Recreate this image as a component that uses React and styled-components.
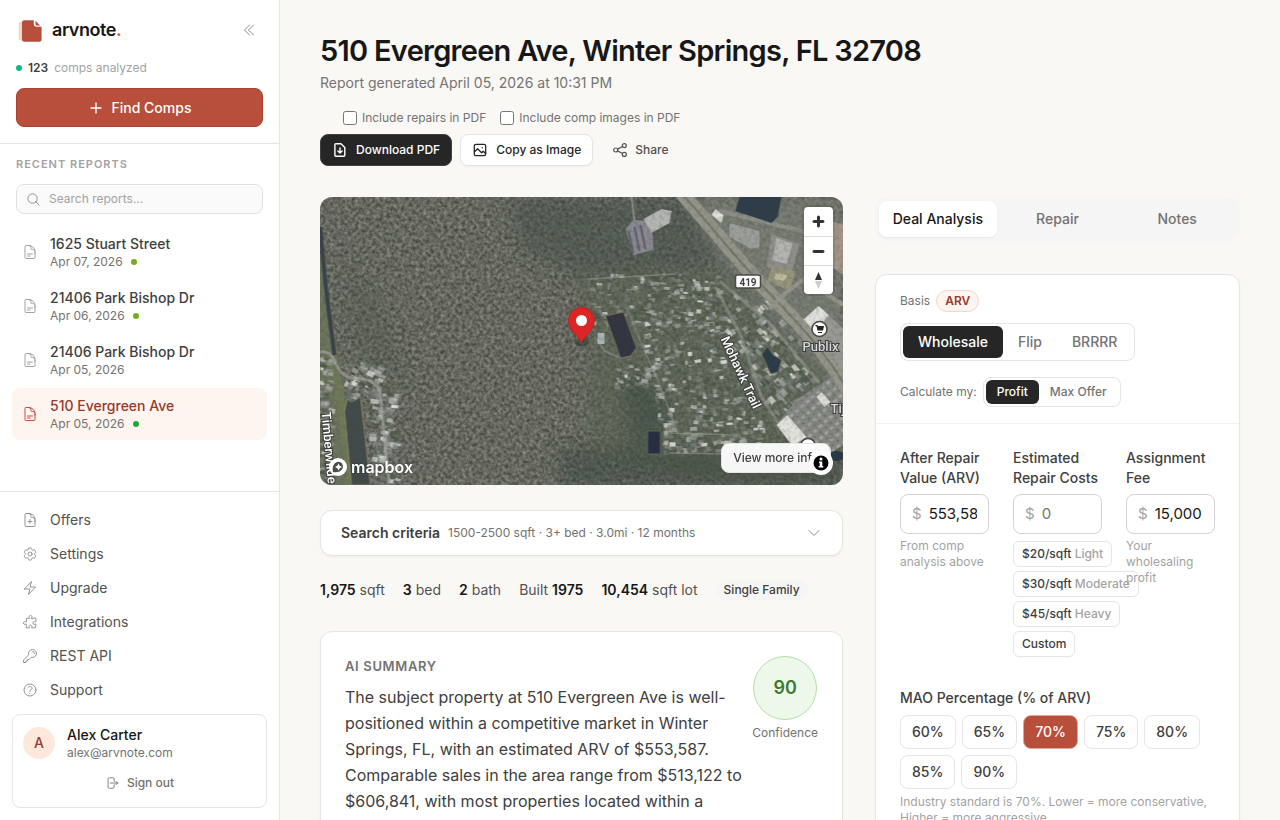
// -------------------------------------------------------------------------
// Libraries

import React from 'react';
import styled, { createGlobalStyle, css } from 'styled-components';

// -------------------------------------------------------------------------
// Icons

import {
  HiOutlineArrowRightOnRectangle,
  HiOutlineBolt,
  HiOutlineChevronDoubleLeft,
  HiOutlineChevronDown,
  HiOutlineCog6Tooth,
  HiOutlineDocumentPlus,
  HiOutlineDocumentText,
  HiOutlineKey,
  HiOutlineMagnifyingGlass,
  HiOutlinePlus,
  HiOutlinePuzzlePiece,
  HiOutlineQuestionMarkCircle,
} from 'react-icons/hi2';

// -------------------------------------------------------------------------
// Data

const reports = [
  { id: 1, name: '1625 Stuart Street', date: 'Apr 07, 2026', dot: '#74ad1c' },
  { id: 2, name: '21406 Park Bishop Dr', date: 'Apr 06, 2026', dot: '#74ad1c' },
  { id: 3, name: '21406 Park Bishop Dr', date: 'Apr 05, 2026' },
  { id: 4, name: '510 Evergreen Ave', date: 'Apr 05, 2026', dot: '#1eaa32', active: true },
];

const links = [
  { label: 'Offers', icon: HiOutlineDocumentPlus },
  { label: 'Settings', icon: HiOutlineCog6Tooth },
  { label: 'Upgrade', icon: HiOutlineBolt },
  { label: 'Integrations', icon: HiOutlinePuzzlePiece },
  { label: 'REST API', icon: HiOutlineKey },
  { label: 'Support', icon: HiOutlineQuestionMarkCircle },
];

const repairPresets = [
  { rate: '$20/sqft', level: 'Light' },
  { rate: '$30/sqft', level: 'Moderate' },
  { rate: '$45/sqft', level: 'Heavy' },
  { rate: 'Custom' },
];

const percentages = [60, 65, 70, 75, 80, 85, 90];

// -------------------------------------------------------------------------
// Styles

const GlobalStyle = createGlobalStyle`
  *, *::before, *::after {
    box-sizing: border-box;
  }
  body {
    margin: 0;
    background: #faf8f5;
    color: #171717;
    font-family: Inter, "Liberation Sans", sans-serif;
    font-size: 14px;
    line-height: 20px;
  }
  h1, h2, p, ul {
    margin: 0;
    padding: 0;
  }
  button, input {
    font: inherit;
    color: inherit;
  }
  button {
    cursor: pointer;
  }
`;

const Shell = styled.div`
  display: flex;
  height: 100vh;
  overflow: hidden;
`;

const Sidebar = styled.aside`
  display: flex;
  flex-direction: column;
  flex: 0 0 280px;
  background: #fff;
  border-right: 1px solid #e5e5e5;
`;

const SidebarTop = styled.div`
  padding: 14px 16px 16px;
  border-bottom: 1px solid #e5e5e5;
`;

const BrandRow = styled.div`
  display: flex;
  align-items: center;
  justify-content: space-between;
  height: 32px;
`;

const Brand = styled.a`
  display: flex;
  align-items: center;
  gap: 8px;
  color: #171717;
  font-family: Inter, sans-serif;
  font-size: 18px;
  font-weight: 600;
  letter-spacing: -0.025em;
  text-decoration: none;

  span span {
    color: #d9573d;
  }
`;

const IconButton = styled.button`
  display: flex;
  padding: 6px;
  border: 0;
  background: none;
  color: #8c8c8c;
  font-size: 16px;
`;

const CompCount = styled.p`
  display: flex;
  align-items: center;
  gap: 6px;
  margin: 14px 0 12px;
  color: #a3a3a3;
  font-size: 12px;
  line-height: 16px;

  strong {
    color: #404040;
    font-weight: 600;
  }
`;

const Dot = styled.span`
  flex: none;
  width: 6px;
  height: 6px;
  border-radius: 50%;
  background: ${props => props.$color};
`;

const FindButton = styled.button`
  display: flex;
  align-items: center;
  justify-content: center;
  gap: 8px;
  width: 100%;
  height: 39px;
  border: 1px solid #a84331;
  border-radius: 8px;
  background: #b84f3b;
  color: #fff;
  font-weight: 500;

  svg {
    font-size: 16px;
    stroke-width: 2;
  }
`;

const Recent = styled.section`
  flex: 1;
  min-height: 0;
  padding: 10px 12px;
`;

const RecentTitle = styled.h2`
  margin: 0 4px 10px;
  color: #a3a3a3;
  font-size: 11px;
  font-weight: 600;
  letter-spacing: 1px;
  text-transform: uppercase;
`;

const SearchBox = styled.label`
  display: flex;
  align-items: center;
  gap: 8px;
  height: 30px;
  margin: 0 4px 12px;
  padding: 0 9px;
  border: 1px solid #e0e0e0;
  border-radius: 8px;
  background: #fafafa;
  color: #8c8c8c;

  svg {
    flex: none;
    font-size: 15px;
  }
  input {
    width: 100%;
    padding: 0;
    border: 0;
    outline: 0;
    background: none;
    font-size: 12px;
  }
  input::placeholder {
    color: #a3a3a3;
  }
`;

const List = styled.ul`
  display: flex;
  flex-direction: column;
  gap: ${props => props.$gap}px;
  list-style: none;
`;

const ReportLink = styled.a`
  display: flex;
  align-items: center;
  gap: 12px;
  height: 52px;
  padding: 0 10px;
  border-radius: 8px;
  color: #404040;
  font-weight: 500;
  line-height: 20px;
  text-decoration: none;

  > svg {
    flex: none;
    color: #a3a3a3;
    font-size: 16px;
  }
  ${props => props.$active && css`
    background: #fef5f0;
    color: #97392b;

    > svg {
      color: #c2513c;
    }
  `}
`;

const ReportDate = styled.span`
  display: flex;
  align-items: center;
  gap: 8px;
  color: #737373;
  font-size: 12px;
  font-weight: 400;
  line-height: 16px;
`;

const SidebarBottom = styled.nav`
  padding: 11px 12px 12px;
  border-top: 1px solid #e5e5e5;
`;

const NavLink = styled.a`
  display: flex;
  align-items: center;
  gap: 12px;
  height: 34px;
  padding: 0 10px;
  color: #525252;
  text-decoration: none;

  svg {
    color: #949494;
    font-size: 16px;
  }
`;

const Account = styled.div`
  display: flex;
  flex-direction: column;
  gap: 7px;
  margin-top: 7px;
  padding: 10px 10px 9px;
  border: 1px solid #e5e5e5;
  border-radius: 8px;
`;

const AccountUser = styled.div`
  display: flex;
  align-items: center;
  gap: 12px;
  font-weight: 500;

  small {
    display: block;
    color: #737373;
    font-size: 12px;
    font-weight: 400;
    line-height: 16px;
  }
`;

const Avatar = styled.span`
  display: grid;
  place-items: center;
  width: 32px;
  height: 32px;
  border-radius: 50%;
  background: #fee8dc;
  color: #97392b;
  font-weight: 500;
`;

const SignOut = styled.button`
  display: flex;
  align-items: center;
  justify-content: center;
  gap: 8px;
  height: 30px;
  padding: 0;
  border: 0;
  background: none;
  color: #737373;
  font-size: 12px;
  font-weight: 500;

  svg {
    font-size: 14px;
  }
`;

const Main = styled.main`
  flex: 1;
  min-width: 0;
  overflow-y: auto;
  padding: 32px 40px;
  scrollbar-width: none;
`;

const Title = styled.h1`
  font-size: 29px;
  font-weight: 600;
  letter-spacing: -0.025em;
  line-height: 38px;
`;

const Subtitle = styled.p`
  margin-top: 3px;
  color: #737373;
`;

const Actions = styled.div`
  display: flex;
  flex-direction: column;
  align-items: flex-end;
  gap: 8px;
  width: fit-content;
  margin: 17px 0 31px;
`;

const ActionRow = styled.div`
  display: flex;
  gap: ${props => props.$gap}px;
`;

const Check = styled.label`
  display: flex;
  align-items: center;
  gap: 5px;
  color: #737373;
  font-size: 12px;
  line-height: 16px;

  input {
    width: 14px;
    height: 14px;
    margin: 0;
  }
`;

const ActionButton = styled.button`
  display: flex;
  align-items: center;
  gap: 8px;
  height: 32px;
  padding: 0 11px;
  border: 1px solid transparent;
  border-radius: 8px;
  background: none;
  color: #525252;
  font-size: 12px;
  font-weight: 500;

  ${props => props.$look === 'dark' && css`
    border-color: #404040;
    background: #262626;
    color: #fff;
  `}
  ${props => props.$look === 'light' && css`
    border-color: #e5e5e5;
    background: #fff;
    color: #262626;
    box-shadow: 0 1px 2px rgba(0, 0, 0, 0.04);
  `}
`;

const Columns = styled.div`
  display: grid;
  grid-template-columns: minmax(0, 1fr) 365px;
  gap: 32px;
`;

const Column = styled.div`
  display: flex;
  flex-direction: column;
  min-width: 0;
`;

const MapFrame = styled.div`
  position: relative;
  height: 288px;
  overflow: hidden;
  border-radius: 12px;

  > svg {
    display: block;
    width: 100%;
    height: 100%;
  }
`;

const MapControls = styled.div`
  position: absolute;
  top: 10px;
  right: 10px;
  width: 29px;
  border-radius: 4px;
  background: #fff;
  box-shadow: 0 0 0 2px rgba(0, 0, 0, 0.1);
`;

const MapControl = styled.button`
  display: block;
  width: 29px;
  height: 29px;
  padding: 0;
  border: 0;
  background: none;

  & + & {
    border-top: 1px solid #ddd;
  }
  svg {
    display: block;
  }
`;

const MapBrand = styled.a`
  position: absolute;
  left: 8px;
  bottom: 8px;
  display: flex;
  align-items: center;
  gap: 3px;
  color: #fff;
  font-size: 16px;
  font-weight: 600;
  text-decoration: none;
  text-shadow: 0 0 2px rgba(0, 0, 0, 0.6);
`;

const MoreInfo = styled.button`
  position: absolute;
  right: 12px;
  bottom: 12px;
  height: 30px;
  padding: 0 11px;
  border: 1px solid #e5e5e5;
  border-radius: 8px;
  background: rgba(255, 255, 255, 0.95);
  color: #404040;
  font-size: 12px;
  font-weight: 500;
`;

const Attribution = styled.button`
  position: absolute;
  right: 10px;
  bottom: 10px;
  width: 24px;
  height: 24px;
  padding: 0;
  border: 0;
  border-radius: 50%;
  background: #fff;

  svg {
    display: block;
  }
`;

const Card = styled.section`
  border: 1px solid #e5e5e5;
  border-radius: 12px;
  background: #fff;
  box-shadow: 0 1px 2px rgba(0, 0, 0, 0.05);
`;

const Criteria = styled.button`
  display: flex;
  align-items: center;
  gap: 8px;
  height: 46px;
  margin: 25px 0 24px;
  padding: 0 20px;
  border: 1px solid #e5e5e5;
  border-radius: 12px;
  background: #fff;
  box-shadow: 0 1px 2px rgba(0, 0, 0, 0.05);
  color: #737373;
  font-size: 12px;

  strong {
    color: #404040;
    font-size: 14px;
    font-weight: 600;
  }
  svg {
    margin-left: auto;
    color: #8c8c8c;
    font-size: 16px;
  }
`;

const Facts = styled.div`
  display: flex;
  flex-wrap: wrap;
  align-items: center;
  gap: 18px;
  margin-bottom: 31px;
  color: #525252;

  strong {
    color: #171717;
    font-weight: 600;
  }
`;

const Tag = styled.span`
  padding: 0 8px;
  border-radius: 10px;
  background: #f5f5f5;
  color: #404040;
  font-size: 12px;
  font-weight: 500;
`;

const SummaryCard = styled(Card)`
  display: flex;
  align-items: flex-start;
  flex: 1;
  gap: 8px;
  padding: 24px;

  h2 {
    margin-bottom: 8px;
    color: #737373;
    font-size: 13px;
    font-weight: 600;
    letter-spacing: 0.05em;
  }
  p {
    color: #404040;
    font-size: 16px;
    line-height: 26px;
  }
`;

const SummaryText = styled.div`
  flex: 1;
`;

const Confidence = styled.div`
  display: flex;
  flex-direction: column;
  align-items: center;
  gap: 3px;
  color: #737373;
  font-size: 12px;
`;

const Score = styled.span`
  display: grid;
  place-items: center;
  width: 64px;
  height: 64px;
  border: 1px solid #b5e0a8;
  border-radius: 50%;
  background: #eef8ea;
  color: #3d7a30;
  font-size: 18px;
  font-weight: 600;
`;

const Tabs = styled.div`
  display: flex;
  gap: 2px;
  padding: 4px;
  border-radius: 12px;
  background: #f5f5f5;
`;

const Tab = styled.button`
  flex: 1;
  height: 36px;
  padding: 0;
  border: 0;
  border-radius: 8px;
  background: ${props => (props.$active ? '#fff' : 'none')};
  box-shadow: ${props => (props.$active ? '0 1px 2px rgba(0, 0, 0, 0.06)' : 'none')};
  color: ${props => (props.$active ? '#171717' : '#737373')};
  font-weight: 500;
`;

const DealCard = styled(Card)`
  flex: 1;
  margin-top: 33px;
`;

const DealHead = styled.div`
  display: flex;
  flex-direction: column;
  align-items: flex-start;
  padding: 15px 24px 16px;
  border-bottom: 1px solid #f0f0f0;
`;

const Line = styled.div`
  display: flex;
  align-items: center;
  gap: 6px;
  color: #737373;
  font-size: 12px;
`;

const Basis = styled.span`
  padding: 0 8px;
  border: 1px solid #f6d5ca;
  border-radius: 11px;
  background: #fef5f0;
  color: #97392b;
  font-weight: 600;
`;

const Segments = styled.div`
  display: flex;
  margin: ${props => (props.$small ? '0' : '11px 0 16px')};
  padding: 2px;
  border: 1px solid #e5e5e5;
  border-radius: 8px;
`;

const Segment = styled.button`
  height: ${props => (props.$small ? 24 : 32)}px;
  padding: 0 ${props => (props.$small ? 11 : 15)}px;
  border: 0;
  border-radius: 6px;
  background: ${props => (props.$active ? '#262626' : 'none')};
  color: ${props => (props.$active ? '#fff' : '#737373')};
  font-size: ${props => (props.$small ? 12 : 14)}px;
  font-weight: 500;
`;

const DealBody = styled.div`
  padding: 24px;
`;

const Fields = styled.div`
  display: grid;
  grid-template-columns: repeat(3, minmax(0, 1fr));
  gap: 24px;
  margin-bottom: 31px;
`;

const Label = styled.label`
  display: block;
  color: #404040;
  font-weight: 500;
`;

const Money = styled.div`
  display: flex;
  align-items: center;
  gap: 7px;
  height: 40px;
  margin: 6px 0 4px;
  padding: 0 11px;
  border: 1px solid #d4d4d4;
  border-radius: 8px;
  color: #a3a3a3;
  font-size: 15px;

  input {
    width: 100%;
    min-width: 0;
    padding: 0;
    border: 0;
    outline: 0;
    background: none;
    color: #171717;
  }
  input::placeholder {
    color: #737373;
  }
`;

const Help = styled.p`
  color: #a3a3a3;
  font-size: 12px;
  line-height: 16px;
`;

const Presets = styled.div`
  display: flex;
  flex-direction: column;
  align-items: flex-start;
  gap: 4px;
  padding-top: 3px;
`;

const Preset = styled.button`
  height: 26px;
  padding: 0 8px;
  border: 1px solid #e5e5e5;
  border-radius: 6px;
  background: none;
  color: #404040;
  font-size: 12px;
  font-weight: 500;
  white-space: nowrap;

  span {
    color: #a3a3a3;
  }
`;

const Percentages = styled.div`
  display: flex;
  flex-wrap: wrap;
  gap: 6px;
  margin: 7px 0 5px;
`;

const Percentage = styled.button`
  height: 34px;
  padding: 0 11px;
  border: 1px solid ${props => (props.$active ? '#e0a598' : '#e5e5e5')};
  border-radius: 8px;
  background: ${props => (props.$active ? '#b84f3b' : 'none')};
  color: ${props => (props.$active ? '#fff' : '#404040')};
  font-weight: 500;
`;

const StreetName = styled.text`
  fill: ${props => (props.$muted ? '#d9d9d9' : '#fff')};
  stroke: #3a3d3c;
  stroke-width: 2px;
  paint-order: stroke;
  font-family: Roboto, sans-serif;
  font-size: 13px;
  font-weight: 500;
`;

// -------------------------------------------------------------------------
// Drawings

function Logo() {
  return (
    <svg width="28" height="28" viewBox="0 0 28 28" aria-hidden="true">
      <rect x="2.700" y="5.500" width="12" height="19" rx="2.500" fill="#f3d5ce" />
      <path d="M8.500 4.300h9.300v3.200a3.200 3.200 0 0 0 3.200 3.200h4.600v12.500a2.500 2.500 0 0 1-2.500 2.500H8.500A2.500 2.500 0 0 1 6 23.200V6.800a2.500 2.500 0 0 1 2.500-2.500z" fill="#b84f3b" />
      <path d="M19.500 4.800l4.600 4.600H21a1.500 1.500 0 0 1-1.500-1.500z" fill="#b84f3b" />
    </svg>
  );
}

function DownloadIcon() {
  return (
    <svg width="16" height="16" viewBox="0 0 16 16" fill="none" stroke="currentColor" strokeWidth="1.4" strokeLinecap="round" strokeLinejoin="round">
      <path d="M3.800 1.800h5.200L12.800 5.600v7.700c0 .5-.4.900-.9.900H3.800c-.5 0-.9-.4-.9-.9V2.700c0-.5.4-.9.900-.9z" />
      <path d="M8 6v4.800M5.900 8.900 8 11l2.100-2.100" />
    </svg>
  );
}

function ImageIcon() {
  return (
    <svg width="16" height="16" viewBox="0 0 16 16" fill="none" stroke="currentColor" strokeWidth="1.3" strokeLinecap="round" strokeLinejoin="round">
      <rect x="2.300" y="2.300" width="11.400" height="11.400" rx="1.600" />
      <path d="M2.500 9.800 5.600 6.800l4 4 1.600-1.600 2.400 2.200" />
      <circle cx="10.200" cy="5.800" r=".7" fill="currentColor" stroke="none" />
    </svg>
  );
}

function ShareIcon() {
  return (
    <svg width="14" height="16" viewBox="1 0 14 16" fill="none" stroke="currentColor" strokeWidth="1.2">
      <circle cx="3.700" cy="8" r="2" />
      <circle cx="12.300" cy="3.600" r="2" />
      <circle cx="12.300" cy="12.400" r="2" />
      <path d="M5.500 7.100l5-2.600M5.500 8.900l5 2.600" />
    </svg>
  );
}

// Small repeatable generator, so that the roofs never move between renders
function roofs(seed, count, area, angle, size) {
  let value = seed * 7919;
  const next = () => {
    value = (value * 16807) % 2147483647;
    return value / 2147483647;
  };
  const shades = ['#b4b6b1', '#9a9d99', '#868984', '#dcdeda', '#6f7973', '#4b564a', '#545e4b'];
  return Array.from({ length: count }, (_, i) => {
    const x = area[0] + next() * area[2];
    const y = area[1] + next() * area[3];
    return (
      <rect
        key={`${seed}-${i}`}
        x={x}
        y={y}
        width={size * (0.4 + next() * 0.7)}
        height={size * (0.3 + next() * 0.4)}
        fill={shades[Math.floor(next() * shades.length)]}
        opacity={0.45 + next() * 0.5}
        transform={`rotate(${angle} ${x} ${y})`}
      />
    );
  });
}

function Satellite() {
  return (
    <svg viewBox="0 0 524 288" preserveAspectRatio="xMidYMid slice" role="img" aria-label="Satellite map">
      <defs>
        <filter id="forest" x="0" y="0" width="100%" height="100%" colorInterpolationFilters="sRGB">
          <feTurbulence type="fractalNoise" baseFrequency="0.28" numOctaves="3" seed="7" />
          <feColorMatrix values="0.420 0.060 0 0 0.170  0.420 0 0 0 0.205  0.400 0 0.040 0 0.165  0 0 0 0 1" />
        </filter>
        <filter id="grain" x="0" y="0" width="100%" height="100%" colorInterpolationFilters="sRGB">
          <feTurbulence type="fractalNoise" baseFrequency="0.25" numOctaves="3" seed="3" />
          <feColorMatrix values="0 0 0 0 0.250  0 0 0 0 0.290  0 0 0 0 0.250  2.400 0 0 0 -1" />
        </filter>
        <filter id="soft"><feGaussianBlur stdDeviation="9" /></filter>
        <filter id="photo"><feGaussianBlur stdDeviation="0.450" /></filter>
        <pattern id="parking" width="7" height="9" patternUnits="userSpaceOnUse" patternTransform="rotate(-42)">
          <rect width="7" height="9" fill="#868782" />
          <rect width="4" height="3" fill="#a3a4a1" />
          <rect x="4" y="5" width="2" height="2" fill="#6a6f6f" />
        </pattern>
      </defs>
      <rect width="524" height="288" filter="url(#forest)" />

      <g filter="url(#soft)">
        <path d="M190 0h180l40 70-150 10-60-30z" fill="#3f4d45" opacity=".5" />
        <path d="M262 75h150l112 120v93H400l-130-40z" fill="#556150" opacity=".5" />
        <path d="M300 170l50 30 0 40-40 10z" fill="#33443a" opacity=".4" />
        <path d="M240 250h150l134 10v30H240z" fill="#3a483e" opacity=".5" />
        <path d="M20 60l40 40 30 90-60-40z" fill="#4a5544" opacity=".3" />
        <path d="M370 0h154v200L400 60z" fill="#7e8179" opacity=".7" />
      </g>

      <g filter="url(#photo)">
        <path d="M0 60C12 105 16 150 22 180l14 108H0z" fill="#6d765a" opacity=".8" />
        <path d="M1 30c3 50 9 90 14 128" fill="none" stroke="#39434a" strokeWidth="4" />
        {roofs(11, 90, [-2, 155, 12, 130], 12, 7)}
        {roofs(23, 60, [26, 163, 36, 34], 25, 8)}
        {roofs(31, 110, [50, 188, 24, 98], 8, 8)}
        <path d="M0 155c14-2 14 10 20 18s14 9 22 9 12 3 18 10c2 12 4 50 10 94" fill="none" stroke="#a5a59c" strokeWidth="3" opacity=".7" />
        <path d="M12 165l16 123h14L22 185z" fill="#6f7a58" />
        <path d="M25 214l3-12 4 3 9-5 10 88H32z" fill="#434b4c" stroke="#8b8368" strokeWidth="1" />

        {roofs(41, 240, [268, 76, 135, 52], 4, 6)}
        {roofs(43, 170, [322, 120, 85, 65], -10, 6)}
        {roofs(44, 50, [295, 165, 40, 24], 8, 6)}
        {roofs(47, 120, [335, 185, 90, 40], 8, 6)}
        {roofs(53, 160, [342, 218, 100, 36], -2, 7)}
        {roofs(59, 90, [405, 95, 50, 60], 48, 7)}
        {roofs(61, 90, [428, 120, 60, 70], 48, 8)}
        {roofs(67, 50, [445, 170, 50, 50], 48, 8)}
        <g fill="none" stroke="#989992" strokeWidth="1.500" opacity=".6">
          <path d="M267 82l90-5M275 140l10 14 18 8M308 112l16 40 14 30 20 54M350 236l64 2M350 256l60 1" />
          <path d="M396 90l26 50 20 60 22 34M400 84l50 42 50 60" strokeWidth="3" />
        </g>

        <path d="M306 32l8-9 18 1 2 29-20 5z" fill="#8a8890" />
        <path d="M309 34l5 22M315 30l5 24M321 28l5 24" stroke="#605e69" strokeWidth="2" />
        <path d="M324 22l18-10 10 2-2 12-18 10z" fill="#b4b6b4" />
        <path d="M312 0l3 24" stroke="#8d908a" strokeWidth="2" />

        <path d="M410 26l30 8 0 16-8 2-22-12z" fill="#9c9e9a" />
        <path d="M396 12l8 6-2 8-10-8z" fill="#dfdfdb" />
        <path d="M400 14l124 30" stroke="#8d8e88" strokeWidth="4" />
        <path d="M420 0h42l-4 20-6 6-36-12z" fill="#2f3c48" />
        <path d="M452 37l28 10-9 32-24-9z" fill="#8f8f89" />
        <path d="M457 41l16 6-6 20-14-4z" fill="#b4b5b1" />
        <path d="M500 20l24 8v50l-28-18z" fill="#a39686" />
        <path d="M452 70l24 4-6 20-22-10z" fill="#97957b" />
        <path d="M456 76l12 2-3 6-10-2z" fill="#c0bba0" />
        <path d="M483 128l18-18 23 22v60l-22-28z" fill="#989993" />
        <path d="M478 128l21-19 10 9-14 18z" fill="#e0e0dc" />
        <path d="M458 226l20-24 46-30v76l-22 14-20-10z" fill="url(#parking)" />
        <path d="M457 228l11-10 19 22-14 9z" fill="#e2e2dc" />
        <path d="M497 200l5-5 9 10-6 5z" fill="#dcdcd6" />

        <path d="M362-4c30 34 46 54 70 81 30 34 68 66 96 116" fill="none" stroke="#96958c" strokeWidth="14" />
        <path d="M362-4c30 34 46 54 70 81 30 34 68 66 96 116" fill="none" stroke="#737868" strokeWidth="2" />
        <path d="M450 112l14-14 20-16 40 26" fill="none" stroke="#96958c" strokeWidth="4" />
        <path d="M286 119l18-4 13 36-6 8-10 2z" fill="#303541" stroke="#77735c" />
        <rect x="278" y="136" width="7" height="11" fill="#a9b5b5" />
        <path d="M328 234h13v23h-13z" fill="#272e3f" stroke="#62675d" />
        <path d="M442 157l6-8 6 9 8 5-3 12-8 2z" fill="#2b3c47" stroke="#7d775c" />
        <ellipse cx="517" cy="259" rx="8" ry="5" fill="#2b3744" />
      </g>
      <rect width="524" height="288" filter="url(#grain)" opacity=".22" />

      <rect x="416" y="78" width="25" height="13" rx="2" fill="#fff" stroke="#4a4a4a" strokeWidth="1.500" />
      <text x="428.500" y="88.500" textAnchor="middle" fontFamily="Roboto" fontSize="10" fontWeight="700" fill="#3f3f3f">419</text>
      <StreetName transform="translate(401 142) rotate(65)">Mohawk Trail</StreetName>
      <StreetName transform="translate(2 215) rotate(85)">Timberwilde</StreetName>
      <StreetName x="501" y="154" textAnchor="middle" $muted>Publix</StreetName>
      <StreetName x="511" y="216" $muted>Tij</StreetName>
      <circle cx="500" cy="132" r="7.500" fill="#fff" stroke="#444" strokeWidth="1.500" />
      <path d="M496 128.500h1.500l1 4.500h4.500l.8-3.500h-5.500zM498.500 135.500h4" fill="#222" stroke="#222" strokeWidth="1.200" />
      <circle cx="488.500" cy="249" r="7.500" fill="#fff" stroke="#444" strokeWidth="1.500" />

      <ellipse cx="262" cy="145" rx="8" ry="4" fill="#000" opacity=".25" />
      <path d="M262 145.500c-4-7-13-13-13-22a13 13 0 0 1 26 0c0 9-9 15-13 22z" fill="#dc2626" stroke="#b91c1c" strokeWidth=".8" />
      <circle cx="262" cy="123.500" r="5.500" fill="#fff" />
    </svg>
  );
}

// -------------------------------------------------------------------------
// Sections

function SidePanel() {
  return (
    <Sidebar>
      <SidebarTop>
        <BrandRow>
          <Brand href="#home">
            <Logo />
            <span>arvnote<span>.</span></span>
          </Brand>
          <IconButton aria-label="Collapse sidebar"><HiOutlineChevronDoubleLeft /></IconButton>
        </BrandRow>
        <CompCount>
          <Dot $color="#0fb981" />
          <strong>123</strong> comps analyzed
        </CompCount>
        <FindButton><HiOutlinePlus />Find Comps</FindButton>
      </SidebarTop>

      <Recent>
        <RecentTitle>Recent reports</RecentTitle>
        <SearchBox>
          <HiOutlineMagnifyingGlass />
          <input type="text" placeholder="Search reports..." aria-label="Search reports" />
        </SearchBox>
        <List $gap={2}>
          {reports.map(report => (
            <li key={report.id}>
              <ReportLink href={`#report-${report.id}`} $active={report.active}>
                <HiOutlineDocumentText />
                <span>
                  {report.name}
                  <ReportDate>
                    {report.date}
                    {report.dot && <Dot $color={report.dot} />}
                  </ReportDate>
                </span>
              </ReportLink>
            </li>
          ))}
        </List>
      </Recent>

      <SidebarBottom>
        <List $gap={0}>
          {links.map(({ label, icon: Icon }) => (
            <li key={label}><NavLink href="#menu"><Icon />{label}</NavLink></li>
          ))}
        </List>
        <Account>
          <AccountUser>
            <Avatar>A</Avatar>
            <span>
              Alex Carter
              <small>alex@arvnote.com</small>
            </span>
          </AccountUser>
          <SignOut><HiOutlineArrowRightOnRectangle />Sign out</SignOut>
        </Account>
      </SidebarBottom>
    </Sidebar>
  );
}

function PropertyMap() {
  return (
    <MapFrame>
      <Satellite />
      <MapControls>
        <MapControl aria-label="Zoom in">
          <svg width="29" height="29" viewBox="0 0 29 29" fill="#333">
            <path d="M14.500 8.500c-.75 0-1.500.75-1.500 1.500v3h-3c-.75 0-1.500.75-1.500 1.500S9.250 16 10 16h3v3c0 .75.75 1.500 1.500 1.500S16 19.750 16 19v-3h3c.75 0 1.500-.75 1.500-1.500S19.750 13 19 13h-3v-3c0-.75-.75-1.500-1.500-1.500z" />
          </svg>
        </MapControl>
        <MapControl aria-label="Zoom out">
          <svg width="29" height="29" viewBox="0 0 29 29" fill="#333">
            <path d="M10 13c-.75 0-1.500.75-1.500 1.500S9.250 16 10 16h9c.75 0 1.500-.75 1.500-1.500S19.750 13 19 13h-9z" />
          </svg>
        </MapControl>
        <MapControl aria-label="Reset bearing">
          <svg width="29" height="29" viewBox="0 0 29 29">
            <path d="M11 14l3.500-8 3.500 8z" fill="#333" />
            <path d="M11 15l3.500 8 3.500-8z" fill="#ccc" />
          </svg>
        </MapControl>
      </MapControls>
      <MapBrand href="#mapbox">
        <svg width="20" height="20" viewBox="0 0 20 20">
          <circle cx="10" cy="10" r="9" fill="#fff" />
          <path d="M5 15c-.8-4 0-7.500 3-9.500 2.500-1.500 5.500-.5 6.500 2 1.200 3-.3 5.800-3 7-2 .8-4.500.800-6.500.5z" fill="#4a4d4c" />
          <path d="M10.500 6.500l1.200 2.300 2.300 1.200-2.300 1.200-1.200 2.300-1.200-2.300L7 10l2.300-1.200z" fill="#fff" />
        </svg>
        mapbox
      </MapBrand>
      <MoreInfo>View more info</MoreInfo>
      <Attribution aria-label="Toggle attribution">
        <svg width="24" height="24" viewBox="0 0 24 24">
          <circle cx="12" cy="12" r="7.500" fill="#000" />
          <circle cx="12" cy="8" r="1.500" fill="#fff" />
          <path d="M10 10.500h3.300v4.500h1v1.500h-4.600V15h1v-3H10z" fill="#fff" />
        </svg>
      </Attribution>
    </MapFrame>
  );
}

function DealAnalysis() {
  return (
    <DealCard>
      <DealHead>
        <Line>Basis <Basis>ARV</Basis></Line>
        <Segments>
          <Segment $active>Wholesale</Segment>
          <Segment>Flip</Segment>
          <Segment>BRRRR</Segment>
        </Segments>
        <Line>
          Calculate my:
          <Segments $small>
            <Segment $small $active>Profit</Segment>
            <Segment $small>Max Offer</Segment>
          </Segments>
        </Line>
      </DealHead>
      <DealBody>
        <Fields>
          <div>
            <Label htmlFor="arv">After Repair Value (ARV)</Label>
            <Money>$<input id="arv" type="text" defaultValue="553,587" /></Money>
            <Help>From comp analysis above</Help>
          </div>
          <div>
            <Label htmlFor="repairs">Estimated Repair Costs</Label>
            <Money>$<input id="repairs" type="text" placeholder="0" /></Money>
            <Presets>
              {repairPresets.map(({ rate, level }) => (
                <Preset key={rate}>{rate} {level && <span>{level}</span>}</Preset>
              ))}
            </Presets>
          </div>
          <div>
            <Label htmlFor="fee">Assignment Fee</Label>
            <Money>$<input id="fee" type="text" defaultValue="15,000" /></Money>
            <Help>Your wholesaling profit</Help>
          </div>
        </Fields>
        <Label as="p">MAO Percentage (% of ARV)</Label>
        <Percentages>
          {percentages.map(value => (
            <Percentage key={value} $active={value === 70}>{value}%</Percentage>
          ))}
        </Percentages>
        <Help>Industry standard is 70%. Lower = more conservative, Higher = more aggressive.</Help>
      </DealBody>
    </DealCard>
  );
}

export default function App() {
  return (
    <Shell>
      <GlobalStyle />
      <SidePanel />
      <Main>
        <Title>510 Evergreen Ave, Winter Springs, FL 32708</Title>
        <Subtitle>Report generated April 05, 2026 at 10:31 PM</Subtitle>
        <Actions>
          <ActionRow $gap={14}>
            <Check><input type="checkbox" />Include repairs in PDF</Check>
            <Check><input type="checkbox" />Include comp images in PDF</Check>
          </ActionRow>
          <ActionRow $gap={8}>
            <ActionButton $look="dark"><DownloadIcon />Download PDF</ActionButton>
            <ActionButton $look="light"><ImageIcon />Copy as Image</ActionButton>
            <ActionButton><ShareIcon />Share</ActionButton>
          </ActionRow>
        </Actions>

        <Columns>
          <Column>
            <PropertyMap />
            <Criteria>
              <strong>Search criteria</strong>
              1500-2500 sqft · 3+ bed · 3.0mi · 12 months
              <HiOutlineChevronDown />
            </Criteria>
            <Facts>
              <span><strong>1,975</strong> sqft</span>
              <span><strong>3</strong> bed</span>
              <span><strong>2</strong> bath</span>
              <span>Built <strong>1975</strong></span>
              <span><strong>10,454</strong> sqft lot</span>
              <Tag>Single Family</Tag>
            </Facts>
            <SummaryCard>
              <SummaryText>
                <h2>AI SUMMARY</h2>
                <p>
                  The subject property at 510 Evergreen Ave is well-positioned within a competitive
                  market in Winter Springs, FL, with an estimated ARV of $553,587. Comparable sales in
                  the area range from $513,122 to $606,841, with most properties located within a
                </p>
              </SummaryText>
              <Confidence><Score>90</Score>Confidence</Confidence>
            </SummaryCard>
          </Column>
          <Column>
            <Tabs role="tablist">
              <Tab role="tab" aria-selected="true" $active>Deal Analysis</Tab>
              <Tab role="tab" aria-selected="false">Repair</Tab>
              <Tab role="tab" aria-selected="false">Notes</Tab>
            </Tabs>
            <DealAnalysis />
          </Column>
        </Columns>
      </Main>
    </Shell>
  );
}
